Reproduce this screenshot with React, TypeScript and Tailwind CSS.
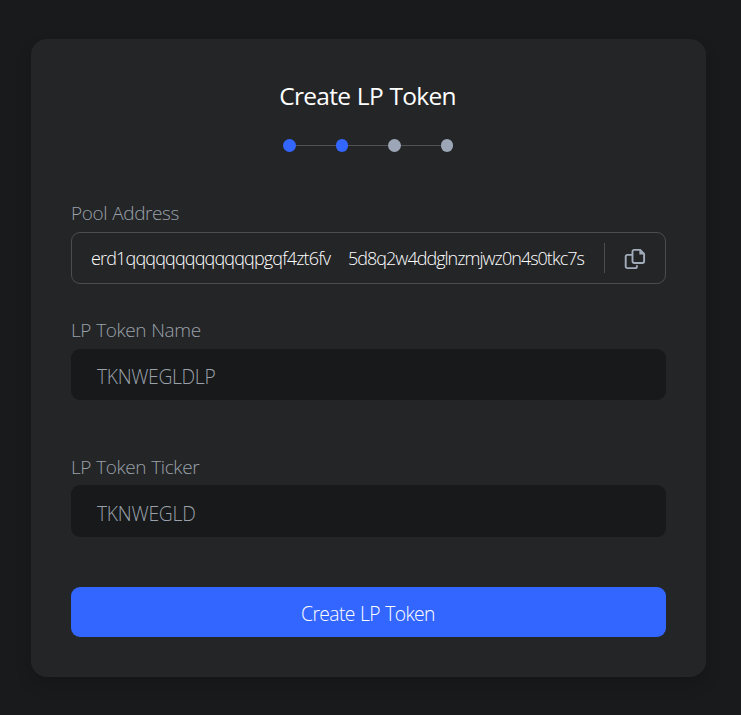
import React from 'react';

function CopyIcon() {
  return (
    <svg width="22" height="22" viewBox="0 0 22 22" fill="none" stroke="#a3acba" strokeWidth="1.9" strokeLinecap="butt" strokeLinejoin="round">
      <path d="M10.2 1.9H16.2L20.1 5.8V13.3A1.7 1.7 0 0 1 18.4 15H10.2A1.7 1.7 0 0 1 8.5 13.3V3.6A1.7 1.7 0 0 1 10.2 1.9Z" />
      <path d="M15.4 1.9V6.6H20.1Z" fill="#a3acba" stroke="none" />
      <path d="M8.3 6.9H3.4A1.7 1.7 0 0 0 1.7 8.6V18.4A1.7 1.7 0 0 0 3.4 20.1H11.2A1.7 1.7 0 0 0 12.9 18.4V17.2" />
    </svg>
  );
}

function Steps({ current, total }: { current: number; total: number }) {
  return (
    <div className="mr-px mt-[26px] flex h-[13px] w-[170px] items-center self-center">
      {Array.from({ length: total }, (_, i) => (
        <React.Fragment key={i}>
          {i > 0 && <div className="h-px flex-1 bg-[#505254]" />}
          <div className={`h-[13px] w-[12.5px] shrink-0 rounded-full ${i < current ? 'bg-[#3366ff]' : 'bg-[#9ca6b6]'}`} />
        </React.Fragment>
      ))}
    </div>
  );
}

function Label({ children }: { children: React.ReactNode }) {
  return <label className="block h-7 whitespace-nowrap text-[19px] leading-7 tracking-[-0.4px] [word-spacing:0.6px] text-[#9aa1aa]">{children}</label>;
}

export default function App() {
  return (
    <div className="flex h-[715px] w-[741px] flex-col bg-[#191a1c] pl-[31px] pt-[39px] font-['Open_Sans','Noto_Sans',sans-serif] font-light">
      <main className="flex h-[638px] w-[675px] flex-col rounded-[16px] bg-[#242527] px-10 pt-10 shadow-[0_8px_16px_rgba(0,0,0,0.15)]">
        <h1 className="h-[34px] whitespace-nowrap pr-[2px] text-center text-[24.5px] font-normal leading-[34px] tracking-[-0.7px] [word-spacing:0.8px] text-white">Create LP Token</h1>
        <Steps current={2} total={4} />

        <div className="mt-[47px]">
          <Label>Pool Address</Label>
          <div className="mt-[5px] flex h-[52px] items-center rounded-[9px] border border-[#4b4d4f] pl-[19px]">
            <div className="flex w-[513px] text-[18px] leading-7 text-white">
              <span className="w-[257px] whitespace-nowrap tracking-[-0.84px]">erd1qqqqqqqqqqqqqpgqf4zt6fv</span>
              <span className="whitespace-nowrap tracking-[-0.98px]">5d8q2w4ddglnzmjwz0n4s0tkc7s</span>
            </div>
            <div className="h-[30px] w-px bg-[#4b4d4f]" />
            <button className="ml-[19px] mt-[2px]" aria-label="Copy"><CopyIcon /></button>
          </div>
        </div>

        <div className="mt-8">
          <Label>LP Token Name</Label>
          <div className="mt-[5px] h-[51px] rounded-[9px] bg-[#18191b] pl-[26px] text-[19.3px] leading-[56px] tracking-[-0.33px] text-[#9aa1aa]"><span>TKNWEGLDLP</span></div>
        </div>

        <div className="mt-[53px]">
          <Label>LP Token Ticker</Label>
          <div className="mt-1 h-[52px] rounded-[9px] bg-[#18191b] pl-[26px] text-[19.3px] leading-[57px] tracking-[-0.25px] text-[#9aa1aa]"><span>TKNWEGLD</span></div>
        </div>

        <button className="mt-[50px] h-[50px] rounded-[9px] bg-[#3366ff] pr-px pt-[2px] text-[19.3px] leading-[50px] tracking-[-0.6px] [word-spacing:0.8px] text-white">Create LP Token</button>
      </main>
    </div>
  );
}
